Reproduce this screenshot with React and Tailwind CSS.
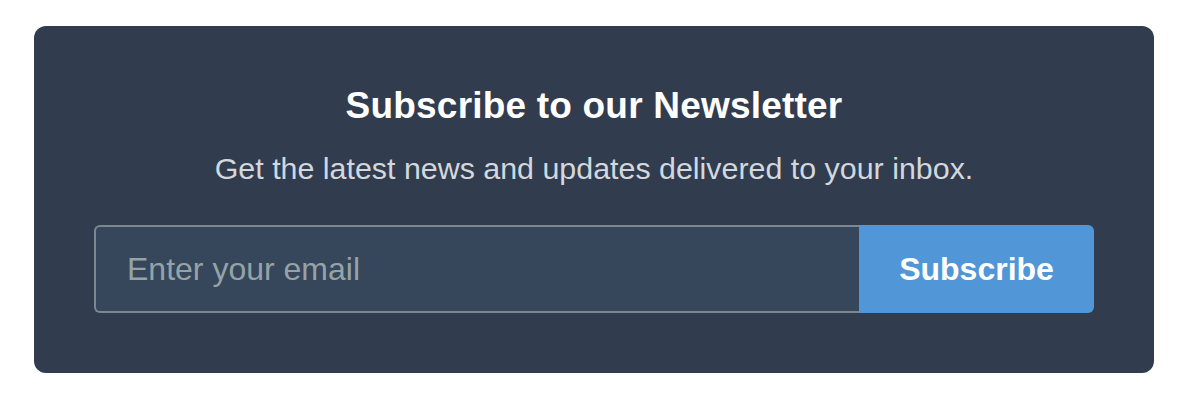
export default function App() {
  return (
    <div
      className="min-h-[408px] bg-white pt-[26px] pl-[34px]"
      style={{ fontFamily: '"Liberation Sans", Arial, Helvetica, sans-serif' }}
    >
      <section className="w-[1120px] rounded-[12px] bg-[#313d4f] px-[60px] pt-[58px] pb-[60px] flex flex-col items-center">
        <h2 className="text-[37px] leading-[44px] font-bold text-white tracking-[0.2px]">
          Subscribe to our Newsletter
        </h2>
        <p className="mt-[22px] text-[30.4px] leading-[36px] text-[#d3d8de]">
          Get the latest news and updates delivered to your inbox.
        </p>
        <form
          className="mt-[39px] flex w-full h-[88px]"
          onSubmit={(e) => e.preventDefault()}
        >
          <input
            type="email"
            placeholder="Enter your email"
            className="flex-1 min-w-0 h-full rounded-l-[6px] border-2 border-r-0 border-[#7b8890] bg-[#36465b] pl-[31px] pr-4 text-[32px] text-white placeholder:text-[#95a3a6] outline-none"
            style={{ fontFamily: '"Liberation Sans", Arial, Helvetica, sans-serif' }}
          />
          <button
            type="submit"
            className="w-[235px] h-full rounded-r-[6px] bg-[#5196d6] text-[32px] font-bold text-white"
            style={{ fontFamily: '"Liberation Sans", Arial, Helvetica, sans-serif' }}
          >
            Subscribe
          </button>
        </form>
      </section>
    </div>
  );
}
